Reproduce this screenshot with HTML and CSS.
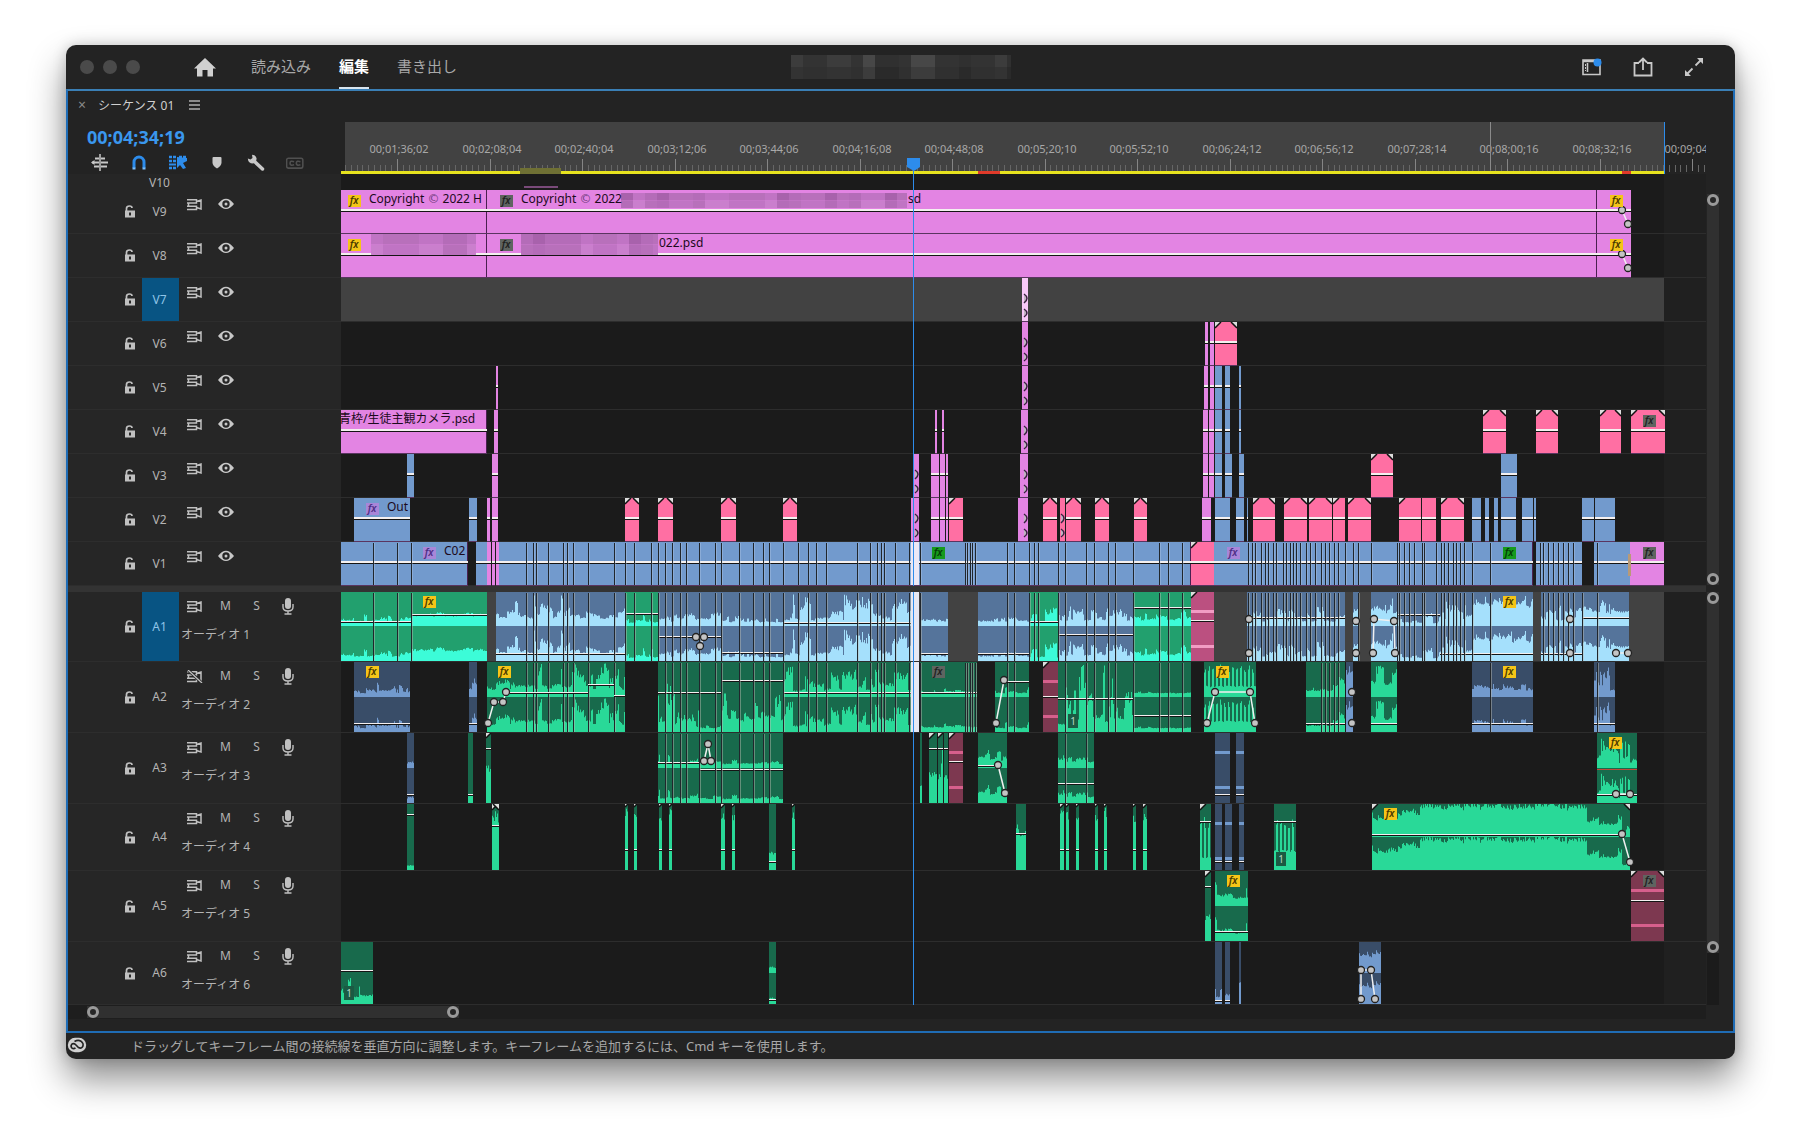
FILE: index.html
```
<!DOCTYPE html>
<html lang="ja">
<head>
  <meta charset="UTF-8">
  <meta name="viewport" content="width=device-width, initial-scale=1.0">
  <title>シーケンス 01</title>
  <link rel="stylesheet" href="styles.css">
</head>
<body>
  <div class="window">
    <header class="titlebar">
      <div class="lights"><span></span><span></span><span></span></div>
      <button class="home" aria-label="ホーム">
        <svg width="22" height="19" viewBox="0 0 22 19"><path d="M11 0 22 10.500H19V18.500H13.500V12H8.500V18.500H3V10.500H0Z" fill="#d0d0d0"/></svg>
      </button>
      <nav class="modes">
        <a href="#">読み込み</a>
        <a href="#" class="active">編集</a>
        <a href="#">書き出し</a>
      </nav>
      <svg class="project" id="project" width="220" height="24"></svg>
      <div class="actions">
        <button aria-label="ワークスペース">
          <svg width="20" height="18" viewBox="0 0 20 18"><path d="M1 2H18V16.500H1ZM1 3.500H18M5.500 5V14" fill="none" stroke="#c8c8c8" stroke-width="1.600"/><path d="M3.500 6V13" stroke="#c8c8c8" stroke-dasharray="2 1"/><circle cx="15.500" cy="4.500" r="4" fill="#2d8ceb"/></svg>
        </button>
        <button aria-label="クイック書き出し">
          <svg width="20" height="20" viewBox="0 0 20 20"><path d="M6 6H1.500V18.500H18.500V6H14M10 13V2M6 5.500 10 1.500 14 5.500" fill="none" stroke="#c8c8c8" stroke-width="1.800"/></svg>
        </button>
        <button aria-label="全画面">
          <svg width="20" height="20" viewBox="0 0 20 20"><path d="M11.500 8.500 18 2M8.500 11.500 2 18" stroke="#c8c8c8" stroke-width="1.800"/><path d="M13 1H19V7ZM1 13V19H7Z" fill="#c8c8c8"/></svg>
        </button>
      </div>
    </header>

    <main class="panel">
      <div class="panel-tabs">
        <button class="close" aria-label="閉じる">×</button>
        <span class="seq-name">シーケンス 01</span>
        <button class="menu" aria-label="メニュー">
          <svg width="11" height="10" viewBox="0 0 11 10"><path d="M0 1H11M0 5H11M0 9H11" stroke="#b0b0b0" stroke-width="1.300"/></svg>
        </button>
      </div>

      <div class="timeline">
        <div class="tracks">
          <div class="ruler-row">
            <div class="tools">
              <span class="timecode">00;04;34;19</span>
              <div class="tool-icons">
                <button aria-label="ネスト"><svg width="18" height="17" viewBox="0 0 18 17"><path d="M9 0V17" stroke="#c8c8c8" stroke-width="1.500"/><path d="M1 8.500H8M10 8.500H17M4 4.500H8M10 4.500H14M3 12.500H8M10 12.500H16" stroke="#c8c8c8" stroke-width="2"/><path d="M0 8.500 3.500 6V11Z" fill="#c8c8c8"/></svg></button>
                <button aria-label="スナップ"><svg width="18" height="17" viewBox="0 0 18 17"><path d="M4 14V8A5 5 0 0 1 14 8V14" fill="none" stroke="#2d8ceb" stroke-width="3"/><path d="M2.500 14.500H5.500M12.500 14.500H15.500" stroke="#7cc0ff" stroke-width="2"/></svg></button>
                <button aria-label="リンクされた選択"><svg width="18" height="17" viewBox="0 0 18 17"><path d="M0 3H8M0 7H8M0 14H8M10 3H17" stroke="#2d8ceb" stroke-width="2.500" stroke-dasharray="3 1"/><path d="M0 10.500H7" stroke="#2d8ceb" stroke-width="2"/><path d="M8 3 18 4V7L14 9 17 14 14 15 11 11 8 14Z" fill="#2d8ceb"/></svg></button>
                <button aria-label="マーカー"><svg width="18" height="17" viewBox="0 0 18 17"><path d="M4.500 4Q4.500 3 5.500 3H12.500Q13.500 3 13.500 4V9Q13 12 9 14.500Q5 12 4.500 9Z" fill="#c8c8c8"/></svg></button>
                <button aria-label="表示設定"><svg width="18" height="17" viewBox="0 0 18 17"><path d="M7 7 15.500 15" stroke="#c8c8c8" stroke-width="3.500" stroke-linecap="round"/><path d="M5 .8 5.500 4 3.500 5.500 .8 4.500Q1.200 9.500 6 9.500 10 8.500 9.500 4 8.500 .8 5 .8Z" fill="#c8c8c8"/></svg></button>
                <button aria-label="キャプション"><svg width="20" height="14" viewBox="0 0 20 14"><rect x=".7" y="1.700" width="18" height="11" rx="2" fill="none" stroke="#505050" stroke-width="1.700"/><path d="M9 5.500Q4.500 4 4.500 7.200T9 9M16 5.500Q11.500 4 11.500 7.200T16 9" fill="none" stroke="#505050" stroke-width="1.800"/></svg></button>
              </div>
            </div>
            <svg class="ruler" id="ruler"></svg>
          </div>
          <div class="track track-cut">
            <div class="head"><span class="label">V10</span></div>
            <svg class="lane" id="lane-V10"></svg>
          </div>
          <div id="video"></div>
          <div class="divider"></div>
          <div id="audio"></div>
          <div class="hscroll"><div class="thumb"><i></i><i></i></div></div>
        </div>
        <div class="vscrolls">
          <div class="vscroll vscroll-video"><div class="thumb"><i></i><i></i></div></div>
          <div class="vscroll vscroll-audio"><div class="thumb"><i></i><i></i></div></div>
        </div>
      </div>
    </main>

    <footer class="statusbar">
      <svg width="20" height="16" viewBox="0 0 20 16"><rect x=".8" y=".8" width="18.400" height="14.400" rx="7.200" fill="#d0d0d0"/><path d="M10.500 9.500 8.500 7.500Q6.500 5.800 4.800 7.200 3.300 9 4.800 10.900 6.500 12.300 8.500 11M7.500 4.500Q11 2.500 14 4.200 17 6.500 15.800 9.500 14 12 11.500 10.500L8 7" fill="none" stroke="#232323" stroke-width="1.600"/></svg>
      <span>ドラッグしてキーフレーム間の接続線を垂直方向に調整します。キーフレームを追加するには、Cmd キーを使用します。</span>
    </footer>
  </div>
  <script src="script.js"></script>
</body>
</html>
```
FILE: styles.css
```
* {
  margin: 0;
  padding: 0;
  box-sizing: border-box;
}
body {
  background: #fff;
  color: #b4b4b4;
  font-family: "Noto Sans", "Noto Sans CJK JP", sans-serif;
  font-size: 12px;
  padding: 45px 65px 86px 66px;
}
button {
  background: none;
  border: none;
  color: inherit;
  font: inherit;
  line-height: 1;
  display: flex;
  align-items: center;
  justify-content: center;
  cursor: pointer;
}
svg {
  display: block;
}
.window {
  background: #232323;
  border-radius: 10px;
  overflow: hidden;
  box-shadow: 0 20px 36px rgba(0,0,0,0.45), 0 0 14px rgba(0,0,0,0.18);
}

/* title bar */
.titlebar {
  display: grid;
  grid-template-columns: 1fr auto 1fr;
  grid-template-rows: 44px;
  align-items: center;
}
.lights {
  display: flex;
  gap: 9px;
  grid-area: 1 / 1;
  padding-left: 14px;
}
.lights span {
  width: 14px;
  height: 14px;
  border-radius: 50%;
  background: #4a4a4a;
}
.home {
  grid-area: 1 / 1;
  justify-self: start;
  margin-left: 128px;
}
.modes {
  grid-area: 1 / 1;
  display: flex;
  gap: 28px;
  align-self: stretch;
  margin-left: 185px;
}
.modes a {
  color: #a8a8a8;
  font-size: 15px;
  line-height: 42px;
  text-decoration: none;
  border-bottom: 2px solid transparent;
  white-space: nowrap;
}
.modes a.active {
  color: #fff;
  font-weight: bold;
  border-color: #d8e4ee;
}
.project {
  grid-area: 1 / 2;
}
.actions {
  grid-area: 1 / 3;
  display: flex;
  justify-content: flex-end;
  gap: 31px;
  padding-right: 31px;
}

/* sequence panel */
.panel {
  border: 2px solid #1f6cb5;
  border-top-color: #3a7fb5;
}
.panel-tabs {
  height: 31px;
  display: flex;
  align-items: center;
  padding: 0 0 3px 8px;
}
.close {
  width: 12px;
  font-size: 14px;
  color: #8a8a8a;
}
.seq-name {
  color: #d0d0d0;
  margin: 0 15px 0 10px;
}
.timeline {
  display: flex;
}
.tracks {
  flex: 1;
  min-width: 0;
}
.ruler-row, .track {
  display: grid;
  grid-template-columns: 273px 1fr;
}
.ruler-row {
  height: 52px;
}
.tools {
  padding-left: 19px;
}
.timecode {
  display: block;
  color: #3a97ee;
  font-size: 18px;
  font-weight: bold;
  line-height: 31px;
}
.tool-icons {
  display: flex;
  gap: 21px;
  padding-left: 4px;
}
.tool-icons button {
  width: 18px;
  height: 19px;
}
.ruler, .lane {
  width: 100%;
  height: 100%;
}
.lane {
  background: #1b1b1b;
}
.track-cut {
  height: 16px;
}
.track-video {
  height: 44px;
}
.track-audio {
  height: 71px;
}
.track-A1 {
  height: 70px;
}
.track-A4 {
  height: 67px;
}
.track-A6 {
  height: 63px;
}
.divider {
  height: 6px;
  background: #333;
}
.head {
  display: grid;
  grid-template-columns: 50px 24px 37px 1fr;
  border-bottom: 1px solid #2d2d2d;
  background: #262626;
}
.head .label {
  grid-column: 3;
  display: flex;
  align-items: center;
  justify-content: center;
  padding-right: 2px;
}
.head .lock {
  grid-column: 2;
}
.head .targeted {
  background: #085483;
  color: #8fc4e8;
}
.controls {
  display: flex;
  align-items: center;
  height: 28px;
}
.controls button {
  width: 31px;
  height: 24px;
  font-size: 12px;
}
.track-name {
  line-height: 30px;
  padding-left: 2px;
}

/* scroll / zoom bars */
.thumb {
  background: #303030;
  display: flex;
  justify-content: space-between;
  align-items: center;
}
.thumb i {
  width: 12px;
  height: 12px;
  border: 3px solid #9a9a9a;
  border-radius: 50%;
  background: #262626;
}
.hscroll {
  height: 26px;
  padding: 1px 0 13px 19px;
  background: linear-gradient(#1e1e1e 14px, #232323 14px);
}
.hscroll .thumb {
  width: 23%;
  height: 12px;
}
.vscrolls {
  width: 27px;
  display: flex;
  flex-direction: column;
  align-items: center;
  padding: 72px 13px 26px 0;
}
.vscroll {
  width: 12px;
  background: #1b1b1b;
}
.vscroll .thumb {
  flex-direction: column;
}
.vscroll-video {
  height: 391px;
  margin-bottom: 7px;
}
.vscroll-video .thumb {
  height: 100%;
}
.vscroll-audio {
  flex: 1;
}
.vscroll-audio .thumb {
  height: 361px;
}

.statusbar {
  height: 26px;
  display: flex;
  align-items: center;
  gap: 44px;
  padding: 0 0 2px 1px;
  color: #a8a8a8;
  font-size: 13px;
}

/* timeline drawing */
.ruler text {
  fill: #a8a8a8;
  font-size: 11px;
  text-anchor: middle;
}
.clip-name {
  fill: #1c0a1c;
  font-size: 12px;
}
.clip-name .mark {
  font-family: "DejaVu Sans", sans-serif;
  fill: #6e3a7c;
}
.fx {
  font-size: 10px;
  font-style: italic;
  font-weight: 600;
  text-anchor: middle;
}
.count {
  fill: #b8d8c8;
  font-size: 10px;
  text-anchor: middle;
}
```
FILE: script.js
```
// x values are timeline pixels, the visible part starts at ORIGIN
const ORIGIN = 341;
const SEQ_END = 1664;
const PLAYHEAD = 914;

const FILL = { p: '#e384e3', b: '#729acd', r: '#ff6fa3', l: '#f8c8f8' };
// base colour + waveform colour
const AUDIO = {
  G: ['#22a06e', '#3cfcd8'], B: ['#55749b', '#a5e0fc'], R: ['#bb5080', '#f29cc4'],
  g: ['#186a4c', '#29d998'], b: ['#394d68', '#729acd'], r: ['#7d3850', '#d65f8c']
};
const FX = {
  yellow: ['#f5c518', '#4a3a00'], gray: ['#5f6460', '#222'],
  purple: ['#a886d8', '#4f2f86'], green: ['#169a1c', '#053c08']
};

const cuts = [373, 397, 411, 526, 533, 536, 548, 563, 567, 573, 588, 614, 625, 634, 651, 658, 665, 672, 680, 686, 699,
  715, 721, 739, 753, 763, 769, 783, 798, 808, 816, 826, 857, 870, 877, 881, 884, 895, 909, 920, 965, 967, 970, 972, 975,
  1007, 1014, 1029, 1034, 1038, 1058, 1065, 1086, 1094, 1108, 1115, 1133, 1159, 1168, 1182, 1248, 1252, 1255, 1261, 1265,
  1268, 1273, 1276, 1283, 1286, 1290, 1293, 1296, 1300, 1306, 1310, 1315, 1321, 1325, 1329, 1334, 1338, 1345, 1353, 1358,
  1371, 1397, 1399, 1404, 1409, 1414, 1422, 1424, 1436, 1441, 1444, 1448, 1453, 1456, 1460, 1464, 1472, 1490, 1540, 1543,
  1548, 1553, 1558, 1563, 1568, 1573, 1582, 1597];

// [from, to, colour, corners]
const video = {
  V9: [[341, 487, 'p'], [487, 1597, 'p'], [1597, 1631, 'p']],
  V8: [[341, 487, 'p'], [487, 1597, 'p'], [1597, 1631, 'p']],
  V7: [[1022, 1028, 'l', 'k']],
  V6: [[1022, 1028, 'p', 'k'], [1205, 1208, 'p'], [1210, 1214, 'p'], [1215, 1237, 'r', 'LR']],
  V5: [[496, 498, 'p'], [1022, 1028, 'p', 'k'], [1204, 1208, 'p'], [1210, 1214, 'p'], [1215, 1222, 'b'], [1225, 1230, 'b'], [1239, 1241, 'b']],
  V4: [[341, 487, 'p'], [494, 498, 'p'], [935, 937, 'p'], [942, 944, 'p'], [1021, 1028, 'p', 'k'], [1203, 1208, 'p'], [1209, 1214, 'p'],
    [1215, 1222, 'b'], [1225, 1230, 'b'], [1239, 1241, 'b'], [1483, 1506, 'r', 'LR'], [1536, 1558, 'r', 'LR'], [1600, 1621, 'r', 'LR'], [1631, 1665, 'r', 'LR']],
  V3: [[407, 414, 'b'], [492, 498, 'p'], [914, 919, 'p', 'k'], [931, 939, 'p'], [940, 945, 'p'], [946, 948, 'p'], [1020, 1028, 'p', 'k'],
    [1203, 1208, 'p'], [1209, 1214, 'p'], [1215, 1222, 'b'], [1225, 1232, 'b'], [1239, 1244, 'b'], [1371, 1393, 'r', 'LR'], [1501, 1517, 'b']],
  V2: [[354, 410, 'b'], [469, 477, 'b'], [487, 490, 'p'], [492, 498, 'p'], [625, 639, 'r', 'LR'], [658, 673, 'r', 'LR'], [721, 736, 'r', 'LR'], [783, 797, 'r', 'LR'],
    [911, 919, 'p', 'k'], [931, 939, 'p'], [940, 945, 'p'], [946, 948, 'p'], [949, 963, 'r', 'L'], [1018, 1028, 'p', 'k'], [1043, 1057, 'r', 'LR'], [1060, 1065, 'r', 'k'],
    [1066, 1081, 'r', 'LR'], [1095, 1109, 'r', 'LR'], [1134, 1147, 'r', 'LR'], [1202, 1211, 'p'], [1215, 1230, 'b'], [1236, 1244, 'b'], [1247, 1248, 'b'],
    [1253, 1275, 'r', 'LR'], [1284, 1307, 'r', 'LR'], [1309, 1332, 'r', 'LR'], [1333, 1345, 'r', 'L'], [1348, 1371, 'r', 'LR'], [1399, 1421, 'r', 'L'], [1422, 1436, 'r'],
    [1441, 1464, 'r', 'LR'], [1472, 1481, 'b'], [1485, 1489, 'b'], [1494, 1498, 'b'], [1501, 1516, 'b'], [1522, 1533, 'b'], [1534, 1536, 'b'], [1582, 1594, 'b'], [1595, 1615, 'b']],
  V1: [[341, 468, 'b'], [476, 487, 'b'], [487, 491, 'p'], [492, 495, 'p'], [496, 499, 'p'], [499, 1191, 'b'], [1191, 1214, 'r', 'L'], [1214, 1248, 'b'],
    [1248, 1533, 'b'], [1536, 1582, 'b'], [1594, 1630, 'b'], [1630, 1664, 'p']]
};

// [from, to, colour, low, high, volume line y, options]  m: one channel, f: flat, L/R: fade corners
const audio = {
  A1: [[341, 411, 'G', .12, .4, 29], [411, 487, 'G', .27, .4, 22], [496, 625, 'B', .2, .95, 61], [625, 658, 'G', .08, .5, 21],
    [658, 721, 'B', .12, .5, 44], [721, 783, 'B', .1, .3, 60], [783, 911, 'B', .15, 1, 30], [920, 948, 'B', .12, .25, 61], [978, 1029, 'B', .12, .3, 61],
    [1029, 1058, 'G', .1, .75, 29], [1058, 1133, 'B', .15, .6, 42], [1133, 1191, 'G', .15, .55, 15], [1191, 1214, 'R', 0, 0, 28, 'fL'], [1247, 1345, 'B', .12, .6, 25],
    [1353, 1359, 'B', .3, .8, 0], [1371, 1397, 'B', .35, .9, 0], [1397, 1440, 'B', .08, .4, 22], [1440, 1472, 'B', .15, .95, 61], [1472, 1533, 'B', .5, .9, 61],
    [1541, 1582, 'B', .15, .75, 61], [1582, 1629, 'B', .35, .8, 25]],
  A2: [[354, 410, 'b', .1, .4, 61], [469, 477, 'b', .15, .6, 61], [487, 625, 'g', .2, 1, 0], [658, 700, 'g', .05, 1, 30, 'm'], [700, 721, 'g', .05, .2, 30, 'm'],
    [721, 783, 'g', .15, .6, 18, 'm'], [783, 911, 'g', .15, .9, 30], [920, 977, 'g', .12, .25, 30], [995, 1029, 'g', .1, .35, 0], [1043, 1058, 'r', 0, 0, 34, 'fL'],
    [1058, 1133, 'g', .1, 1, 36, 'm'], [1133, 1191, 'g', .1, .14, 53], [1204, 1256, 'g', .2, 1, 0, 's'], [1306, 1333, 'g', .15, .3, 61], [1333, 1345, 'g', .3, .7, 61],
    [1346, 1353, 'b', .6, 1, 0], [1371, 1397, 'g', .25, .95, 61], [1472, 1533, 'b', .18, .4, 61], [1594, 1615, 'b', .15, 1, 61]],
  A3: [[407, 414, 'b', .12, .2, 61], [468, 473, 'g', .1, .15, 61, 'm'], [486, 491, 'g', .4, .8, 15, 'mL'], [658, 700, 'g', .12, .5, 29], [700, 783, 'g', .1, .25, 36],
    [920, 922, 'g', .2, .3, 0, 'm'], [929, 937, 'g', .3, .9, 15, 'mL'], [938, 943, 'g', .2, .9, 15, 'mL'], [944, 948, 'g', .2, .9, 15, 'm'], [949, 963, 'r', 0, 0, 28, 'fL'],
    [978, 1007, 'g', .2, .6, 0], [1058, 1094, 'g', .15, .6, 50], [1215, 1230, 'b', 0, 0, 61, 'f'], [1236, 1244, 'b', 0, 0, 61, 'f'], [1597, 1637, 'g', .12, .9, 61]],
  A4: [[407, 414, 'g', .05, .12, 10, 'm'], [492, 499, 'g', .7, .8, 21, 'mLR'], [1016, 1026, 'g', .5, .85, 29, 'm'], [769, 776, 'g', .2, .8, 57, 'm'],
    [1200, 1211, 'g', .1, .9, 17, 'msL'], [1215, 1222, 'b', 0, 0, 57, 'f'], [1225, 1232, 'b', 0, 0, 57, 'f'], [1239, 1244, 'b', 0, 0, 57, 'f'],
    [1274, 1296, 'g', .2, .9, 17, 'ms'], [1372, 1398, 'g', .5, .7, 0, 'L'], [1398, 1420, 'g', .65, .85, 0], [1420, 1587, 'g', .8, 1, 0], [1587, 1622, 'g', .35, .65, 0], [1622, 1630, 'g', .1, .35, 0, 'R']],
  A5: [[1205, 1211, 'g', .2, .7, 15, 'mL'], [1215, 1248, 'g', .2, .8, 60], [1631, 1664, 'r', 0, 0, 29, 'fLR']],
  A6: [[341, 373, 'g', .1, .65, 28, 'm'], [769, 776, 'g', .15, .3, 57], [1215, 1222, 'b', .1, .7, 58, 'm'], [1225, 1230, 'b', .1, 1, 58, 'm'], [1239, 1241, 'b', .3, 1, 0, 'm'], [1359, 1381, 'b', .5, .75, 0]]
};
[[625, 628], [634, 637], [659, 662], [669, 672], [721, 725], [732, 735], [792, 795], [1060, 1064], [1066, 1069], [1076, 1079],
  [1095, 1098], [1104, 1107], [1133, 1136], [1143, 1147]].forEach(([a, b]) => audio.A4.push([a, b, 'g', .7, .9, 45, 'mL']));

// keyframe paths: flat list of x,y pairs
const keys = {
  V9: [[1622, 20, 1628, 34]],
  V8: [[1622, 20, 1628, 34]],
  A1: [[696, 45, 704, 45, 700, 54], [1249, 27], [1249, 61], [1356, 29], [1356, 61], [1373, 61, 1374, 27, 1394, 29, 1395, 61], [1570, 27], [1570, 61], [1616, 61, 1628, 61]],
  A2: [[488, 61, 494, 40, 503, 40, 506, 30], [996, 61, 1004, 18], [1207, 61, 1215, 30, 1250, 30, 1255, 61], [1352, 30], [1352, 61]],
  A3: [[704, 28, 708, 11, 711, 28], [998, 32, 1005, 60], [1616, 61, 1630, 61]],
  A4: [[1622, 30, 1630, 58]],
  A6: [[1361, 57, 1361, 28, 1371, 28, 1375, 57]]
};
// extra volume segments: x1, x2, y
const levels = {
  A2: [[506, 588, 30], [588, 614, 22], [614, 625, 33], [1004, 1029, 19]],
  A3: [[978, 998, 32]],
  A4: [[1372, 1622, 30]]
};
const fx = {
  V9: [[348, 'yellow'], [500, 'gray'], [1610, 'yellow']],
  V8: [[348, 'yellow'], [500, 'gray'], [1610, 'yellow']],
  V4: [[1643, 'gray']],
  V2: [[366, 'purple']],
  V1: [[423, 'purple'], [932, 'green'], [1227, 'purple'], [1503, 'green'], [1643, 'gray']],
  A1: [[423, 'yellow'], [1503, 'yellow']],
  A2: [[366, 'yellow'], [498, 'yellow'], [932, 'gray'], [1216, 'yellow'], [1503, 'yellow']],
  A3: [[1609, 'yellow']],
  A4: [[1384, 'yellow']],
  A5: [[1227, 'yellow'], [1643, 'gray']]
};
const copy = 'Copyright <tspan class="mark">©</tspan> 2022';
const names = {
  V9: [[369, copy + ' H'], [521, copy], [908, 'sd']],
  V8: [[659, '022.psd']],
  V4: [[339, '青枠/生徒主観カメラ.psd']],
  V2: [[387, 'Out']],
  V1: [[444, 'C02']]
};
const masks = { V9: [[621, 907, 3, 15]], V8: [[371, 476, 0, 21], [521, 658, 0, 21]] };
const counts = { A2: [[1068, 52]], A4: [[1276, 48]], A6: [[344, 44]] };
const cutRanges = {
  V1: [[341, 1582], [1594, 1630]],
  A1: [[341, 948], [978, 1191], [1247, 1345], [1353, 1359], [1371, 1533], [1541, 1629]],
  A2: [[515, 624], [658, 977], [995, 1029], [1058, 1191], [1320, 1345], [1472, 1533], [1594, 1600]],
  A3: [[658, 783], [1058, 1094]]
};

let seed = 7;
function rand() {
  seed = (seed * 16807) % 2147483647;
  return seed / 2147483647;
}
function rect(x, y, w, h, fill) {
  return `<rect x="${x}" y="${y}" width="${w}" height="${h}" fill="${fill}"/>`;
}
function level(a, b, y) {
  return rect(a, y, b - a, 1, '#f4f0f0') + rect(a, y + 1, b - a, 1, '#151515');
}
function corners(a, b, opt) {
  const s = Math.min(6, b - a);
  let out = '';
  if (opt.includes('L')) out += `<path d="M${a} 0H${a + s}L${a} ${s}Z" fill="#ddd"/><path d="M${a + s} 0 ${a} ${s}" stroke="#111" stroke-width="1.5"/>`;
  if (opt.includes('R')) out += `<path d="M${b} 0H${b - s}L${b} ${s}Z" fill="#ddd"/><path d="M${b - s} 0 ${b} ${s}" stroke="#111" stroke-width="1.5"/>`;
  return out;
}
// columns jitter around an envelope that jumps every few pixels, so single peaks stand out
function columns(a, b, lo, hi, spiky) {
  const out = [];
  let env = .3;
  for (let x = a; x < b; x++) {
    if (rand() < .3) env = Math.pow(rand(), 1.8);
    const v = spiky ? (x % 4 < 2 ? .6 + .3 * rand() : .1) : env * (.5 + .5 * rand());
    out.push(lo + (hi - lo) * v + lo * .2 * rand());
  }
  return out;
}
function wave(a, b, base, h, cols, fill) {
  const d = cols.map((v, i) => `V${(base - Math.min(v, 1) * h).toFixed(1)}H${a + i + 1}`).join('');
  return `<path d="M${a} ${base}${d}V${base}Z" fill="${fill}"/>`;
}
function keyPath(p) {
  let pts = '', dots = '';
  for (let i = 0; i < p.length; i += 2) {
    pts += `${p[i]},${p[i + 1]} `;
    dots += `<circle cx="${p[i]}" cy="${p[i + 1]}" r="3.5" fill="#c4c4c4" stroke="#222" stroke-width="1.3"/>`;
  }
  return `<polyline points="${pts}" fill="none" stroke="#f0f0f0" stroke-width="1.5"/>${dots}`;
}
function mosaic(x1, x2, y, h, tones) {
  let out = '';
  for (let x = x1; x < x2; x += 12) {
    const w = Math.min(12, x2 - x);
    const t = Math.floor(rand() * (tones.length - 1));
    out += rect(x, y, w, h / 2, tones[t]) + rect(x, y + h / 2, w, h / 2, tones[t + 1]);
  }
  return out;
}

function overlays(id, h) {
  let out = '';
  const shade = id === 'V1' ? 'rgba(200,215,240,0.3)' : 'rgba(190,190,180,0.45)';
  (cutRanges[id] || []).forEach(([a, b]) => {
    cuts.filter(c => c > a && c < b).forEach(c => {
      out += rect(c, 1, 1, h - 2, '#20262c') + rect(c + 1, 1, 1, h - 2, shade);
    });
  });
  (levels[id] || []).forEach(l => out += level(...l));
  (keys[id] || []).forEach(k => out += keyPath(k));
  (masks[id] || []).forEach(([a, b, y, mh]) => out += mosaic(a, b, y, mh, ['#a862ac', '#b46cb8', '#b870bb', '#c074c4', '#ca7fcd']));
  const top = id[0] === 'V' ? 5 : 4;
  (fx[id] || []).forEach(([x, tone]) => {
    out += rect(x, top, 13, 12, FX[tone][0]) + `<text class="fx" x="${x + 6}" y="${top + 9}" fill="${FX[tone][1]}">fx</text>`;
  });
  (names[id] || []).forEach(([x, t]) => out += `<text class="clip-name" x="${x}" y="13">${t}</text>`);
  (counts[id] || []).forEach(([x, y]) => out += rect(x, y, 10, 14, '#1b5a43') + `<text class="count" x="${x + 5}" y="${y + 11}">1</text>`);
  return out;
}
function lane(id, h, body, selected) {
  return `<svg class="lane"><g transform="translate(${-ORIGIN} 0)">` +
    rect(SEQ_END, 0, 400, h, '#202020') + (selected ? rect(ORIGIN, 0, SEQ_END - ORIGIN, h, '#424242') : '') +
    rect(ORIGIN, h - 1, 2000, 1, '#2d2d2d') + body + overlays(id, h) + rect(PLAYHEAD - 1, 0, 1, h, '#2d8ceb') + '</g></svg>';
}
function videoLane(id) {
  let out = '';
  video[id].forEach(([a, b, c, opt = '']) => {
    out += rect(a, 0, b - a, 43, FILL[c]) + rect(a, 43, b - a, 1, '#5a3560');
    if (b - a > 60) out += rect(b - 1, 0, 1, 43, '#4a2050');
    if (opt.includes('k')) {
      out += `<path d="M${b - 4} 16Q${b + 2} 20 ${b - 4} 25M${b - 4} 31Q${b + 2} 35 ${b - 4} 39" fill="#c4b4c4" stroke="#3a2040" stroke-width="1.5"/>`;
    } else {
      out += rect(a, 19, b - a, 1, '#f4f0f0') + level(a, b, 20);
    }
    out += corners(a, b, opt);
  });
  if (id === 'V1') out += rect(911, 0, 8, 43, '#ece8f6') + rect(1628, 12, 3, 22, '#b89a78');
  return lane(id, 44, out, id === 'V7');
}
function audioLane(id, h) {
  let out = '';
  const mid = Math.round(h / 2) - 1;
  audio[id].forEach(([a, b, c, lo, hi, vol, opt = '']) => {
    const [bg, fg] = AUDIO[c];
    out += rect(a, 0, b - a, h - 1, bg);
    if (opt.includes('f')) {
      out += rect(a, 18, b - a, 3, fg) + rect(a, 53, b - a, 3, fg);
    } else {
      const cols = columns(a, b, lo, hi, opt.includes('s'));
      if (opt.includes('m')) {
        out += wave(a, b, h - 1, h - 2, cols, fg);
      } else {
        out += wave(a, b, mid, mid, cols, fg) + wave(a, b, h - 1, mid, cols, fg);
      }
    }
    if (vol) out += level(a, b, vol);
    out += corners(a, b, opt);
  });
  if (id === 'A1' || id === 'A2') out += rect(911, 0, 8, h - 1, '#e6e8f4');
  if (id === 'A3') out += rect(1597, 36, 40, 1, '#c04a3a');
  return lane(id, h, out, id === 'A1');
}

const lockIcon = '<svg width="12" height="13" viewBox="0 0 12 13"><path d="M2.500 6V3.500Q2.500 1 5.500 1 8 1 8 3" fill="none" stroke="#c0c0c0" stroke-width="1.700"/><path fill-rule="evenodd" d="M1 5.500H11V12.500H1ZM5 7.500V10.500H7V7.500Z" fill="#c0c0c0"/></svg>';
const syncIcon = off => `<svg width="16" height="13" viewBox="0 0 16 13"><path d="M0 1.800H9.500V5H1.500V8.200H9.500V11.400H0M0 5H2M0 8.200H2M9.500 3.500 14 2V11L9.500 9.500" fill="none" stroke="#c0c0c0" stroke-width="1.500"/>${off ? '<path d="M1 0 15 13" stroke="#262626" stroke-width="3"/><path d="M1 0 15 13" stroke="#c0c0c0" stroke-width="1.300"/>' : ''}</svg>`;
const eyeIcon = '<svg width="16" height="12" viewBox="0 0 16 12"><path fill-rule="evenodd" d="M0 6Q8-4.500 16 6 8 16 0 6ZM8 2.300A3.700 3.700 0 1 0 8 9.700 3.700 3.700 0 1 0 8 2.300Z" fill="#c8c8c8"/><circle cx="8" cy="6" r="1.500" fill="#c8c8c8"/></svg>';
const micIcon = '<svg width="12" height="17" viewBox="0 0 12 17"><rect x="3" y="0" width="6" height="11" rx="3" fill="#c0c0c0"/><path d="M1 6V9Q1 13 6 13T11 9V6M6 13V16M2.500 16H9.500" fill="none" stroke="#c0c0c0" stroke-width="1.400"/></svg>';

function head(id, isVideo) {
  const target = id === 'V7' || id === 'A1' ? ' targeted' : '';
  const controls = isVideo
    ? `<button aria-label="同期ロック">${syncIcon()}</button><button aria-label="表示">${eyeIcon}</button>`
    : `<button aria-label="同期ロック">${syncIcon(id === 'A2')}</button><button>M</button><button>S</button><button aria-label="録音">${micIcon}</button>`;
  const name = isVideo ? '' : `<div class="track-name">オーディオ ${id[1]}</div>`;
  return `<div class="head"><button class="lock" aria-label="ロック">${lockIcon}</button><button class="label${target}">${id}</button><div><div class="controls">${controls}</div>${name}</div></div>`;
}

const heights = { A1: 70, A2: 71, A3: 71, A4: 67, A5: 71, A6: 63 };
document.getElementById('video').innerHTML = Object.keys(video)
  .map(id => `<div class="track track-video">${head(id, true)}${videoLane(id)}</div>`).join('');
document.getElementById('audio').innerHTML = Object.keys(audio)
  .map(id => `<div class="track track-audio track-${id}">${head(id, false)}${audioLane(id, heights[id])}</div>`).join('');
document.getElementById('lane-V10').innerHTML = `<g transform="translate(${-ORIGIN} 0)">` +
  rect(524, 12, 34, 2, '#7a4a7a') + rect(SEQ_END, 0, 400, 16, '#202020') + rect(PLAYHEAD - 1, 0, 1, 16, '#2d8ceb') + '</g>';

// ruler
const stamps = ['00;01;36;02', '00;02;08;04', '00;02;40;04', '00;03;12;06', '00;03;44;06', '00;04;16;08', '00;04;48;08', '00;05;20;10',
  '00;05;52;10', '00;06;24;12', '00;06;56;12', '00;07;28;14', '00;08;00;16', '00;08;32;16', '00;09;04;18'];
let r = rect(345, 0, 1320, 50, '#424242');
for (let i = -9; i < 235; i++) {
  const x = Math.round(397 + i * 92.5 / 16);
  if (x > 344) r += rect(x, i % 16 ? 43 : 37, 1, i % 16 ? 7 : 12, i % 16 ? '#666' : '#858585');
}
stamps.forEach((s, i) => r += `<text x="${Math.round(399 + i * 92.5)}" y="31">${s}</text>`);
r += rect(341, 49, 1323, 3, '#e6e21e') + rect(520, 46, 41, 6, '#6f7034') + rect(978, 49, 22, 3, '#e03a2a') + rect(1622, 49, 9, 3, '#e03a2a');
r += rect(1490, 0, 1, 48, '#8a8a8a') + rect(1664, 0, 1, 52, '#2d8ceb');
r += `<path d="M907 36H920V45L914 49 907 45Z" fill="#2d8ceb"/>` + rect(PLAYHEAD - 1, 48, 1, 6, '#2d8ceb');
document.getElementById('ruler').innerHTML = `<g transform="translate(${-ORIGIN} 0)">${r}</g>`;
document.getElementById('project').innerHTML = mosaic(0, 220, 0, 24, ['#474747', '#3c3c3c', '#333', '#303030', '#2a2a2a']);
```
